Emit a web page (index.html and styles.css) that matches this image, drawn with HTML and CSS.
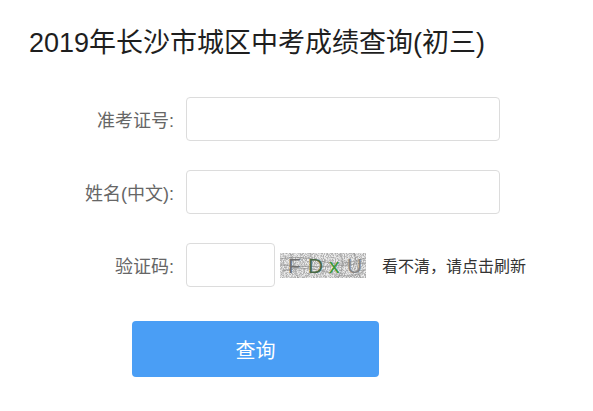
FILE: index.html
```html
<!DOCTYPE html>
<html lang="zh-CN">

<head>
    <meta charset="UTF-8">
    <meta name="viewport" content="width=device-width, initial-scale=1.0">
    <title>成绩查询</title>
    <link rel="stylesheet" href="styles.css">
</head>

<body>
    <h1 class="title">2019年长沙市城区中考成绩查询(初三)</h1>

    <form class="queryForm">
        <div class="row">
            <label class="label">准考证号:</label>
            <input class="field" type="text">
        </div>
        <div class="row">
            <label class="label">姓名(中文):</label>
            <input class="field" type="text">
        </div>
        <div class="row">
            <label class="label">验证码:</label>
            <input class="field short" type="text">
            <svg class="captcha" width="86" height="25" viewBox="0 0 86 25">
                <defs>
                    <filter id="noise" x="0" y="0" width="100%" height="100%">
                        <feTurbulence type="fractalNoise" baseFrequency="1.1 0.7" numOctaves="3" seed="7" />
                        <feColorMatrix type="matrix"
                            values="0 0 0 0 0.42  0 0 0 0 0.42  0 0 0 0 0.42  0 0 0 -3.2 2.05" />
                    </filter>
                </defs>
                <rect width="86" height="25" fill="#ececec" />
                <rect width="86" height="25" filter="url(#noise)" />
                <path d="M0 6 Q20 2 40 8 T86 5 M2 18 Q25 12 50 20 T86 16 M10 0 L18 25 M60 0 Q66 12 58 25 M30 0 Q36 14 26 25 M74 0 L80 25 M0 12 Q40 16 86 10"
                    stroke="#8a8a8a" stroke-width="0.6" fill="none" />
                <text x="8" y="20" fill="#707070" class="cc">F</text>
                <text x="28" y="20" fill="#4a6a45" class="cc">D</text>
                <text x="49" y="20" fill="#3a9a35" class="cc">x</text>
                <text x="67" y="20" fill="#858585" class="cc">U</text>
            </svg>
            <span class="hint">看不清，请点击刷新</span>
        </div>
        <div class="submit">
            <button type="button">查询</button>
        </div>
    </form>
</body>

</html>
```

FILE: styles.css
```css
* {
    box-sizing: border-box;
}

body {
    margin: 0;
    background: #fff;
    font-family: "Liberation Sans", "Noto Sans CJK SC", sans-serif;
}

.title {
    margin: 0;
    padding: 23px 0 0 29px;
    font-size: 27px;
    line-height: 40px;
    font-weight: normal;
    color: #1e1e1e;
}

.queryForm {
    display: flex;
    flex-direction: column;
    gap: 29px;
    margin-top: 34px;
}

.row {
    display: flex;
    align-items: center;
    height: 44px;
}

.label {
    width: 186px;
    padding-right: 12px;
    text-align: right;
    font-size: 18px;
    color: #666;
}

.field {
    width: 314px;
    height: 44px;
    border: 1px solid #dcdcdc;
    border-radius: 4px;
    outline: none;
    background: #fff;
}

.field.short {
    width: 89px;
}

.captcha {
    display: block;
    margin-left: 5px;
}

.captcha .cc {
    font-family: "Liberation Sans", sans-serif;
    font-size: 21px;
}

.hint {
    margin-left: 16px;
    font-size: 16px;
    color: #333;
}

.submit {
    padding-left: 132px;
    margin-top: 5px;
}

.submit button {
    width: 247px;
    height: 56px;
    border: none;
    border-radius: 4px;
    background: #4a9ef5;
    color: #fff;
    font-family: "Noto Sans CJK SC", sans-serif;
    font-size: 20px;
    cursor: pointer;
}
```
